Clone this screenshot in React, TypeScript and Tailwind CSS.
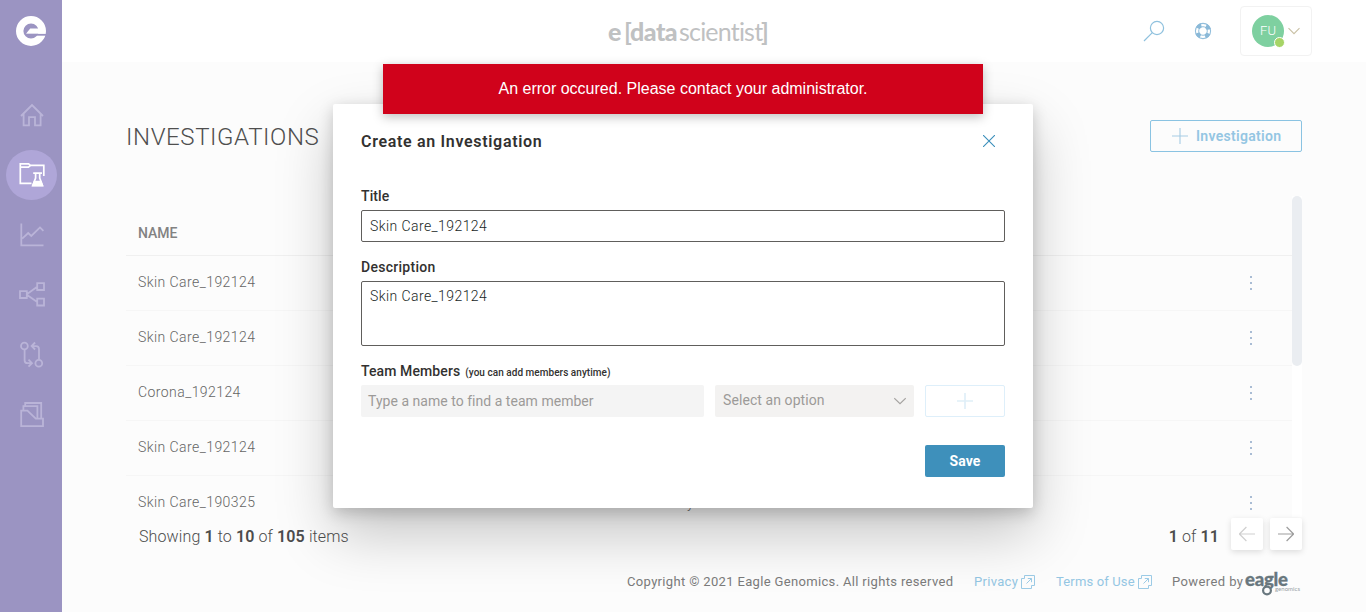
import type { ReactNode } from "react";

const rows = [
  { name: "Skin Care_192124", note: "" },
  { name: "Skin Care_192124", note: "" },
  { name: "Corona_192124", note: "" },
  { name: "Skin Care_192124", note: "" },
  { name: "Skin Care_190325", note: "y" },
];

function EagleMark() {
  return (
    <svg className="h-[30px] w-[30px]" viewBox="0 0 30 30" fill="none">
      <circle cx="15" cy="15" r="11.3" stroke="#fff" strokeWidth="7.4" />
      <path d="M10 17.8 L14.2 12.4 H27 V17.8 Z" fill="#fff" />
      <path d="M10 18.8 H30" stroke="#9b94c2" strokeWidth="1.8" />
    </svg>
  );
}

function NavIcon({ children }: { children: ReactNode }) {
  return (
    <div className="flex h-[60px] w-full items-center justify-center">
      <svg className="h-7 w-7" viewBox="0 0 28 28" fill="none" stroke="#bab4d8" strokeWidth="1.8">
        {children}
      </svg>
    </div>
  );
}

function Sidebar() {
  return (
    <nav className="flex h-full w-[62px] shrink-0 flex-col items-center bg-[#9b94c2] pt-4">
      <EagleMark />
      <div className="mt-[39px] flex w-full flex-col pl-px">
        <NavIcon>
          <path d="M3 15 L14 4 L25 15 M5.6 12.6 V24.4 H11 V16.2 H17 V24.4 H22.6 V12.6" />
        </NavIcon>
        <div className="flex h-[60px] items-center justify-center">
          <div className="flex h-[50px] w-[51px] items-center justify-center rounded-full bg-[#afa6d8]">
            <svg className="h-7 w-7" viewBox="0 0 28 28" fill="none" stroke="#fff" strokeWidth="1.7">
              <path d="M13.5 22.3 H2.3 V2.9 H10.6 L12.4 4.4 H25.8 V15" />
              <path d="M2.3 6.1 H10.5 L12.4 4.4" />
              <path d="M15.2 12.2 H24 M17.6 12.2 V17 L14.8 24.3 H24.4 L21.7 17 V12.2" />
              <path d="M16.4 20.6 H22.8 L24.4 24.6 H14.8 Z" fill="#fff" />
            </svg>
          </div>
        </div>
        <NavIcon>
          <path d="M3.3 2.5 V24.4 H25.5 M4.2 17.6 L10.2 12 L13.3 15 L22 6.4 L25.4 9.8" />
        </NavIcon>
        <NavIcon>
          <path d="M2 10.2 H8.8 V17 H2 Z M19.2 2.2 H26 V9 H19.2 Z M19.2 17.7 H26 V24.5 H19.2 Z M8.8 13.2 L19.2 5.8 M8.8 13.8 L19.2 21" />
        </NavIcon>
        <NavIcon>
          <circle cx="6.4" cy="5" r="3.4" />
          <circle cx="20.8" cy="22.2" r="3.4" />
          <path d="M6.6 8.4 V19.2 Q6.6 22.2 9.6 22.2 H13.8 M10.5 18.7 L14 22.2 L10.5 25.7 M21 18.7 V8.1 Q21 5.1 18 5.1 H13.8 M17.1 1.5 L13.6 5 L17.1 8.5" />
        </NavIcon>
        <NavIcon>
          <path d="M3.2 25.1 V9.6 H9.4 L17.8 17.7 H25 V25.1 Z" />
          <path d="M5.4 9.2 V5.1 H19.4 V17.3 M7.2 4.7 V2 H23.2 V17.3" />
        </NavIcon>
      </div>
    </nav>
  );
}

function Header() {
  return (
    <header className="flex h-[62px] w-full shrink-0 items-center bg-white pr-[54px]">
      <div className="ml-[546px] flex w-[170px] items-baseline whitespace-nowrap font-[Lato,sans-serif] text-[25px] leading-[30px] text-[#bfc1c2]">
        <span className="w-[16px] font-black">e</span>
        <span className="w-[6px] font-bold">[</span>
        <span className="w-[49px] font-black tracking-[-0.5px]">data</span>
        <span className="w-[82px] font-normal tracking-[-0.8px]">scientist</span>
        <span className="font-bold">]</span>
      </div>
      <div className="ml-auto flex items-center">
        <svg className="h-[22px] w-[22px]" viewBox="0 0 22 22" fill="none" stroke="#8fc1de" strokeWidth="1.2">
          <circle cx="14" cy="8" r="6.6" />
          <path d="M9.3 12.7 L1 21" />
        </svg>
        <svg className="ml-[29px] h-[18px] w-[18px]" viewBox="0 0 18 18" fill="none">
          <circle cx="9" cy="9" r="7.6" stroke="#93bfdc" strokeWidth="1.1" />
          <circle cx="9" cy="9" r="4.3" stroke="#93bfdc" strokeWidth="1" />
          <circle cx="9" cy="9" r="6" stroke="#8ab9d8" strokeWidth="4.2" strokeDasharray="4.4 5.025" strokeDashoffset="-2.5" />
        </svg>
        <div className="ml-[28px] flex h-[50px] w-[72px] items-center rounded border border-[#f2f2f2] pl-[11px]">
          <div className="relative flex h-8 w-8 items-center justify-center rounded-full bg-[#7ed0a0] font-[Roboto,sans-serif] text-[13px] font-light text-white">
            FU
            <span className="absolute left-[22px] top-[22px] h-[11px] w-[11px] rounded-full border-[1.5px] border-white bg-[#a6d466]" />
          </div>
          <svg className="ml-1 h-2 w-3" viewBox="0 0 12 8" fill="none" stroke="#c9c0a4" strokeWidth="1.1">
            <path d="M0.5 1.2 L6 6.7 L11.5 1.2" />
          </svg>
        </div>
      </div>
    </header>
  );
}

function ExternalIcon() {
  return (
    <svg className="ml-[3px] h-[14px] w-[14px]" viewBox="0 0 14 14" fill="none" stroke="#9ccbe6" strokeWidth="1">
      <path d="M3.5 3.5 V0.5 H13.5 V10.5 H10.5 M3.5 3.5 H0.5 V13.5 H10.5 V10.5 M5.5 8.5 L10.5 3.5 M6.8 3.5 H10.5 V7.2" />
    </svg>
  );
}

function PagerButton({ flip, color }: { flip?: boolean; color: string }) {
  return (
    <button className="flex h-8 w-8 items-center justify-center rounded-[2px] bg-white shadow-[0_2px_6px_rgba(0,0,0,0.13)]">
      <svg className={flip ? "h-4 w-4 rotate-180" : "h-4 w-4"} viewBox="0 0 16 16" fill="none" stroke={color} strokeWidth="1.2">
        <path d="M0 8 H15.4 M8.6 1 L15.6 8 L8.6 15" />
      </svg>
    </button>
  );
}

function Table() {
  return (
    <div className="ml-16 mr-16 mt-[44px] flex h-[321px] overflow-hidden">
      <div className="flex min-w-0 flex-1 flex-col">
        <div className="flex h-[60px] shrink-0 items-center border-b border-[#f0f0f0] pl-3 pt-[15px] text-sm font-medium text-[#828282]">
          NAME
        </div>
        {rows.map((row, i) => (
          <div key={i} className="flex h-[55px] shrink-0 items-center border-b border-[#f6f6f6] pl-3 text-sm font-light tracking-[0.43px] text-[#656565]">
            <span className="w-[549px] pb-0.5">{row.name}</span>
            <span>{row.note}</span>
            <span className="ml-auto mr-[40px] flex flex-col gap-1">
              <i className="h-0.5 w-0.5 bg-[#a9bcd4]" />
              <i className="h-0.5 w-0.5 bg-[#a9bcd4]" />
              <i className="h-0.5 w-0.5 bg-[#a9bcd4]" />
            </span>
          </div>
        ))}
      </div>
      <div className="w-[10px] bg-white">
        <div className="h-[170px] rounded-full bg-[#eaedf1]" />
      </div>
    </div>
  );
}

function Footer() {
  return (
    <footer className="mt-[20px] flex h-6 items-center whitespace-nowrap pl-[565px] text-[13px] text-[#7b7b7b]">
      <span className="w-[347px] tracking-[0.34px]">Copyright © 2021 Eagle Genomics. All rights reserved</span>
      <a className="flex w-[82px] items-center tracking-[0.3px] text-[#94c6e3]">
        Privacy <ExternalIcon />
      </a>
      <a className="flex w-[116px] items-center tracking-[0.15px] text-[#94c6e3]">
        Terms of Use <ExternalIcon />
      </a>
      <span className="w-[73px] tracking-[0.4px]">Powered by</span>
      <svg className="mt-1 h-[27px] w-[58px] shrink-0" viewBox="0 0 58 27">
        <text x="0" y="14.5" fontFamily="Lato, sans-serif" fontWeight="900" fontSize="18.5" textLength="43" fill="#68777e" stroke="#68777e" strokeWidth="0.3">eagle</text>
        <circle cx="22" cy="19.5" r="3.9" fill="#fcfcfc" stroke="#68777e" strokeWidth="2.2" />
        <text x="30" y="20" fontFamily="Lato, sans-serif" fontSize="6" textLength="25" fill="#98a1a6">genomics</text>
      </svg>
    </footer>
  );
}

function Label({ children }: { children: ReactNode }) {
  return <div className="flex h-5 items-baseline text-sm font-medium leading-5 text-[#323130]">{children}</div>;
}

function Modal() {
  return (
    <div className="absolute left-[333px] top-[104px] flex h-[404px] w-[700px] flex-col rounded-[2px] bg-white px-7 shadow-[0_25.6px_57.6px_rgba(0,0,0,0.22),0_4.8px_14.4px_rgba(0,0,0,0.18)]">
      <div className="mt-[27px] flex h-5 items-center justify-between pr-[10px]">
        <h2 className="pt-0.5 text-base font-semibold tracking-[0.68px] text-[#323130]">Create an Investigation</h2>
        <svg className="h-3 w-3" viewBox="0 0 12 12" fill="none" stroke="#3b8fba" strokeWidth="1.1">
          <path d="M0 0 L12 12 M12 0 L0 12" />
        </svg>
      </div>
      <div className="mt-[35px]">
        <Label><span className="tracking-[0.1px]">Title</span></Label>
        <div className="mt-1 flex h-8 items-center rounded-[2px] border border-[#605e5c] pl-2 text-sm font-light tracking-[0.42px] text-[#201f1e]">
          Skin Care_192124
        </div>
      </div>
      <div className="mt-[15px]">
        <Label><span className="tracking-[0.28px]">Description</span></Label>
        <div className="mt-1 h-[65px] rounded-[2px] border border-[#605e5c] pl-2 pt-1 text-sm font-light leading-5 tracking-[0.42px] text-[#201f1e]">
          Skin Care_192124
        </div>
      </div>
      <div className="mt-[15px]">
        <Label>
          <span className="tracking-[0.1px]">Team Members</span>
          <span className="ml-[5px] text-[10px] tracking-[0.04px]">(you can add members anytime)</span>
        </Label>
        <div className="mt-1 flex h-8 gap-[11px] text-sm text-[#9c9a98]">
          <div className="flex w-[343px] items-center rounded-[2px] bg-[#f4f4f4] pl-[7px] tracking-[0.03px]">
            Type a name to find a team member
          </div>
          <div className="flex w-[199px] items-center justify-between rounded-[2px] bg-[#f3f2f1] pl-2 pr-2 tracking-[0.08px]">
            <span className="pb-0.5">Select an option</span>
            <svg className="h-2 w-3" viewBox="0 0 12 8" fill="none" stroke="#a5a3a1" strokeWidth="1.1">
              <path d="M0.3 1.2 L6 6.7 L11.7 1.2" />
            </svg>
          </div>
          <div className="flex w-20 items-center justify-center rounded-[2px] border border-[#deeffa]">
            <svg className="h-4 w-4" viewBox="0 0 16 16" stroke="#e0eff8" strokeWidth="1.7">
              <path d="M0 8 H16 M8 0 V16" />
            </svg>
          </div>
        </div>
      </div>
      <button className="mt-7 h-8 w-20 self-end rounded-[2px] bg-[#3e90bb] text-sm font-bold tracking-[0.15px] text-white">
        Save
      </button>
    </div>
  );
}

function Toast() {
  return (
    <div className="absolute left-[383px] top-16 flex h-[50px] w-[600px] items-center justify-center bg-[#d0021b] font-['Liberation_Sans',Arial,sans-serif] text-base text-white shadow-[0_3px_10px_rgba(0,0,0,0.25)]">
      An error occured. Please contact your administrator.
    </div>
  );
}

export default function App() {
  return (
    <div className="relative flex h-[612px] w-[1366px] overflow-hidden bg-[#fcfcfc] font-[Roboto,sans-serif]">
      <Sidebar />
      <main className="flex min-w-0 flex-1 flex-col">
        <Header />
        <div className="mt-[58px] flex h-8 items-center justify-between pl-16 pr-16">
          <h1 className="pt-0.5 text-2xl font-light tracking-[0.6px] text-[#4f4f4f]">INVESTIGATIONS</h1>
          <button className="flex h-8 w-[152px] items-center rounded-[2px] border border-[#8ac3e2] pl-[21px] text-sm font-semibold tracking-[0.3px] text-[#94c6e3]">
            <svg className="mr-2 h-4 w-4" viewBox="0 0 16 16" stroke="#a5cbe3" strokeWidth="1.1">
              <path d="M0 8 H16 M8 0 V16" />
            </svg>
            Investigation
          </button>
        </div>
        <Table />
        <div className="mt-px flex h-8 items-center pl-[77px] pr-16 text-base font-light text-[#4c4c4c]">
          <span className="pt-[5px] tracking-[0.12px]">
            Showing <b className="font-semibold">1</b> to <b className="font-semibold">10</b> of <b className="font-semibold">105</b> items
          </span>
          <span className="ml-auto mr-3 pt-[5px] tracking-[0.1px]">
            <b className="font-semibold">1</b> of <b className="font-semibold">11</b>
          </span>
          <div className="flex gap-[7px]">
            <PagerButton flip color="#cfcfcf" />
            <PagerButton color="#9d9d9d" />
          </div>
        </div>
        <Footer />
      </main>
      <Modal />
      <Toast />
    </div>
  );
}
